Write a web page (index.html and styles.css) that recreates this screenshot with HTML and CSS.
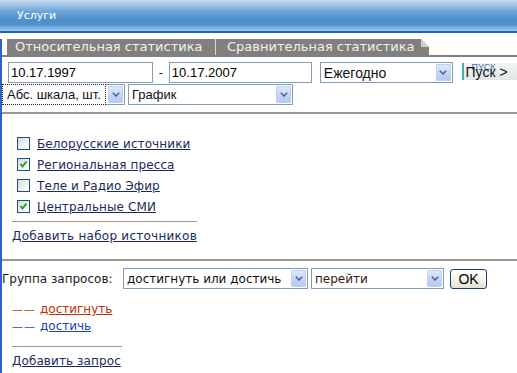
FILE: index.html
```html
<!DOCTYPE html>
<html>
<head>
<meta charset="utf-8">
<link rel="stylesheet" href="styles.css">
</head>
<body>
<div class="header">Услуги</div>
<div class="main">
  <div class="tabs">
    <div class="tab tab-first">Относительная статистика</div>
    <div class="tab tab-second">Сравнительная статистика<span class="fold"></span></div>
  </div>

  <div class="row row-dates">
    <input class="field date1" type="text" value="10.17.1997">
    <span class="dash">-</span>
    <input class="field date2" type="text" value="10.17.2007">
    <div class="select sel-period"><span class="sel-text">Ежегодно</span><span class="arrow"><svg width="8" height="5" viewBox="0 0 8 5"><path d="M0.8 0.8 L4 4 L7.2 0.8" fill="none" stroke="#4d6185" stroke-width="1.5"/></svg></span></div>
    <div class="go-btn"><span class="go-small">ПУСК</span><span class="go-text">Пуск &gt;</span></div>
  </div>

  <div class="row row-view">
    <div class="select sel-scale focused"><span class="sel-text">Абс. шкала, шт.</span><span class="arrow"><svg width="8" height="5" viewBox="0 0 8 5"><path d="M0.8 0.8 L4 4 L7.2 0.8" fill="none" stroke="#4d6185" stroke-width="1.5"/></svg></span></div>
    <div class="select sel-chart"><span class="sel-text">График</span><span class="arrow"><svg width="8" height="5" viewBox="0 0 8 5"><path d="M0.8 0.8 L4 4 L7.2 0.8" fill="none" stroke="#4d6185" stroke-width="1.5"/></svg></span></div>
  </div>

  <div class="rule rule-wide"></div>

  <ul class="sources">
    <li class="source"><span class="check"></span><a class="link" href="#">Белорусские источники</a></li>
    <li class="source"><span class="check checked"><svg width="11" height="11" viewBox="0 0 11 11"><path d="M2.5 5 L4.5 7.5 L8.5 2.5" fill="none" stroke="#21a121" stroke-width="2"/></svg></span><a class="link" href="#">Региональная пресса</a></li>
    <li class="source"><span class="check"></span><a class="link" href="#">Теле и Радио Эфир</a></li>
    <li class="source"><span class="check checked"><svg width="11" height="11" viewBox="0 0 11 11"><path d="M2.5 5 L4.5 7.5 L8.5 2.5" fill="none" stroke="#21a121" stroke-width="2"/></svg></span><a class="link" href="#">Центральные СМИ</a></li>
  </ul>

  <div class="rule rule-short rule-sources"></div>
  <a class="link block-link add-sources" href="#">Добавить набор источников</a>

  <div class="rule rule-wide rule-group"></div>

  <div class="row row-group">
    <span class="group-label">Группа запросов:</span>
    <div class="select sel-group"><span class="sel-text">достигнуть или достичь</span><span class="arrow"><svg width="8" height="5" viewBox="0 0 8 5"><path d="M0.8 0.8 L4 4 L7.2 0.8" fill="none" stroke="#4d6185" stroke-width="1.5"/></svg></span></div>
    <div class="select sel-action"><span class="sel-text">перейти</span><span class="arrow"><svg width="8" height="5" viewBox="0 0 8 5"><path d="M0.8 0.8 L4 4 L7.2 0.8" fill="none" stroke="#4d6185" stroke-width="1.5"/></svg></span></div>
    <button class="ok-btn" type="button">OK</button>
  </div>

  <ul class="queries">
    <li class="query q-red"><span class="q-dash">——</span><a class="q-link" href="#">достигнуть</a></li>
    <li class="query q-blue"><span class="q-dash">——</span><a class="q-link" href="#">достичь</a></li>
  </ul>

  <div class="rule rule-query"></div>
  <a class="link block-link add-query" href="#">Добавить запрос</a>
</div>
</body>
</html>
```
FILE: styles.css
```css
html, body {
  margin: 0;
  padding: 0;
  background: #fff;
}
body {
  width: 517px;
  height: 373px;
  overflow: hidden;
  font-family: "DejaVu Sans", Verdana, sans-serif;
  font-size: 12px;
  color: #222;
}

.header {
  height: 31px;
  border-bottom: 2px solid #1c68b6;
  padding-left: 17px;
  display: flex;
  align-items: center;
  color: #fff;
  font-size: 11px;
  background: linear-gradient(to bottom,
    #c9dcf0 0px, #b3cfeb 3px, #8dbbe3 7px, #6ea7d8 11px,
    #5a99d0 16px, #4d8ec9 21px, #5593cb 25px, #80b3df 28px, #9cc4e8 31px);
}

.main {
  border-left: 2px solid #2b62cf;
  height: 340px;
}

.tabs {
  display: flex;
  margin-top: 6px;
  padding-left: 5px;
  border-bottom: 2px solid #808080;
}
.tab {
  height: 16px;
  line-height: 16px;
  background: #808080;
  color: #f0f0f0;
  font-size: 13px;
  white-space: nowrap;
  box-sizing: border-box;
}
.tab-first {
  width: 209px;
  padding-left: 8px;
  border-right: 1px solid #d8d8d8;
}
.tab-second {
  width: 213px;
  padding-left: 11px;
  position: relative;
}
.fold {
  position: absolute;
  top: 0;
  right: 0;
  width: 8px;
  height: 8px;
  background: linear-gradient(to bottom left, #fff 50%, #d0d0d0 50%);
}

.row {
  display: flex;
  align-items: center;
}
.row-dates {
  margin-top: 5px;
  padding-left: 6px;
  align-items: flex-start;
}
.field {
  box-sizing: border-box;
  height: 21px;
  border: 1px solid #7f9db9;
  padding: 0 2px;
  margin: 0;
  font-family: "Liberation Sans", Arial, sans-serif;
  font-size: 13px;
  color: #000;
  outline: none;
}
.date1 { width: 145px; }
.date2 { width: 143px; }
.dash {
  width: 16px;
  text-align: center;
  font-family: "Liberation Sans", Arial, sans-serif;
  font-size: 13px;
  line-height: 21px;
}

.select {
  box-sizing: border-box;
  height: 21px;
  border: 1px solid #7f9db9;
  display: flex;
  align-items: center;
  background: #fff;
  font-family: "Liberation Sans", Arial, sans-serif;
  font-size: 13px;
  color: #111;
}
.sel-text {
  flex: 1;
  padding-left: 3px;
  white-space: nowrap;
  overflow: hidden;
}
.arrow {
  width: 15px;
  height: 17px;
  margin-right: 1px;
  box-sizing: border-box;
  border: 1px solid #bfcff2;
  border-radius: 1px;
  background: linear-gradient(to bottom, #dfe8fb, #c2d3f6 60%, #b6c9f1);
  display: flex;
  align-items: center;
  justify-content: center;
}
.sel-period {
  width: 134px;
  margin-left: 8px;
  font-size: 14px;
}

.go-btn {
  margin-left: 9px;
  margin-top: 1px;
  width: 56px;
  height: 17px;
  box-sizing: border-box;
  border-left: 2px solid #3fb3a3;
  background: linear-gradient(to bottom, #f4f6f6, #e2e6e8);
  position: relative;
  white-space: nowrap;
  overflow: hidden;
}
.go-small {
  position: absolute;
  left: 8px;
  top: -1px;
  font-family: "Liberation Sans", Arial, sans-serif;
  font-size: 9px;
  color: #4a6aa8;
}
.go-text {
  position: absolute;
  left: 2px;
  top: 1px;
  font-family: "Liberation Sans", Arial, sans-serif;
  font-size: 14px;
  line-height: 16px;
  color: #111;
}

.row-view {
  margin-top: 1px;
}
.sel-scale {
  width: 123px;
}
.sel-scale.focused {
  border-color: #7f9db9;
}
.sel-scale.focused .sel-text {
  align-self: stretch;
  display: flex;
  align-items: center;
  margin-left: -1px;
  margin-top: -1px;
  margin-bottom: -1px;
  margin-right: 2px;
  padding-left: 4px;
  border: 1px dotted #222;
  background: #fff;
}
.sel-chart {
  width: 165px;
  margin-left: 3px;
}

.rule {
  background: #9d968f;
}
.rule-wide {
  height: 2px;
  margin-top: 7px;
}
.rule-short {
  height: 1px;
  margin-left: 10px;
  width: 185px;
}

.sources {
  list-style: none;
  margin: 0;
  padding: 19px 0 0 15px;
}
.source {
  display: flex;
  align-items: center;
  height: 21px;
}
.check {
  width: 13px;
  height: 13px;
  box-sizing: border-box;
  border: 1px solid #1c5180;
  background: linear-gradient(135deg, #d8d8d2, #f6f6f4 70%, #fff);
  display: flex;
  align-items: center;
  justify-content: center;
  margin-right: 7px;
}
.link {
  color: #1c2a5e;
  text-decoration: underline;
  letter-spacing: 0.1px;
}
.rule-sources {
  margin-top: 4px;
}
.block-link {
  display: block;
  width: max-content;
  margin-left: 10px;
  line-height: 16px;
}
.add-sources {
  margin-top: 6px;
  letter-spacing: 0.25px;
}
.rule-group {
  margin-top: 15px;
}

.row-group {
  margin-top: 7px;
  height: 21px;
}
.group-label {
  width: 121px;
  white-space: nowrap;
}
.sel-group {
  width: 185px;
  font-family: "DejaVu Sans", Verdana, sans-serif;
  font-size: 12px;
}
.sel-action {
  width: 133px;
  margin-left: 3px;
  font-family: "DejaVu Sans", Verdana, sans-serif;
  font-size: 12px;
  color: #3a1a10;
}
.ok-btn {
  margin-left: 6px;
  width: 37px;
  height: 20px;
  padding: 0;
  border: 1px solid #1c3c6c;
  border-radius: 3px;
  background: linear-gradient(to bottom, #ffffff, #f3f2ea 60%, #e2e0d4);
  font-family: "Liberation Sans", Arial, sans-serif;
  font-size: 14px;
  color: #000;
}

.queries {
  list-style: none;
  margin: 12px 0 0 0;
  padding: 0 0 0 10px;
}
.query {
  line-height: 16px;
  white-space: nowrap;
}
.q-dash {
  font-size: 11px;
  letter-spacing: 1px;
  margin-right: 4px;
}
.q-red .q-dash { color: #d03a14; }
.q-red .q-link { color: #c03000; }
.q-blue .q-dash { color: #2446c4; }
.q-blue .q-link { color: #2040c0; }
.q-link { text-decoration: underline; }

.rule-query {
  height: 1px;
  width: 110px;
  margin-left: 10px;
  margin-top: 11px;
}
.add-query {
  margin-top: 6px;
}
```
